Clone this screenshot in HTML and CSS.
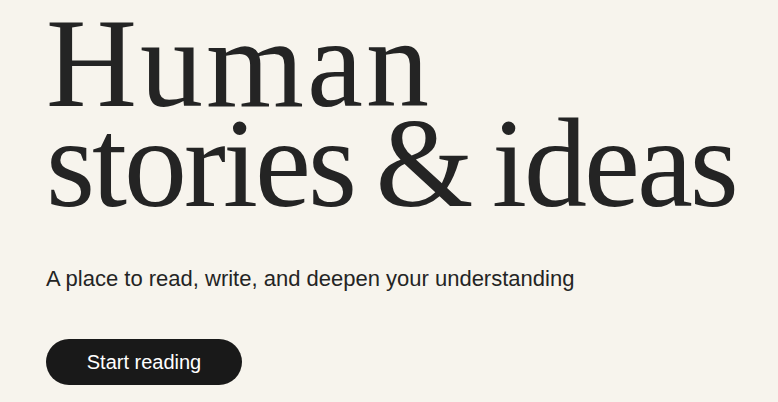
FILE: index.html
```html
<!DOCTYPE html>
<html lang="en">
<head>
<meta charset="utf-8">
<title>Human stories &amp; ideas</title>
<link rel="stylesheet" href="styles.css">
</head>
<body>
<main class="hero">
  <h1 class="hero-title"><span class="line line-wide">Human</span><span class="line line-tight">stories &amp; ideas</span></h1>
  <p class="hero-sub">A place to read, write, and deepen your understanding</p>
  <a class="hero-btn" href="#">Start reading</a>
</main>
</body>
</html>
```
FILE: styles.css
```css
html, body {
  margin: 0;
  padding: 0;
}
body {
  background: #f7f4ed;
  color: #242424;
  width: 778px;
  height: 402px;
  overflow: hidden;
}
.hero {
  display: flex;
  flex-direction: column;
  align-items: flex-start;
  padding: 14px 0 0 46px;
}
.hero-title {
  margin: 0;
  display: flex;
  flex-direction: column;
  font-family: "Liberation Serif", "Times New Roman", serif;
  font-weight: 400;
  font-size: 126px;
  line-height: 100px;
  color: #242424;
}
.line {
  display: block;
  white-space: nowrap;
}
.line-wide {
  letter-spacing: 3px;
}
.line-tight {
  letter-spacing: -3px;
  word-spacing: -7px;
}
.hero-sub {
  margin: 53px 0 0 0;
  font-family: "Liberation Sans", Arial, sans-serif;
  font-size: 22px;
  line-height: 24px;
  color: #242424;
}
.hero-btn {
  margin-top: 48px;
  display: flex;
  align-items: center;
  justify-content: center;
  width: 196px;
  height: 46px;
  border-radius: 23px;
  background: #191919;
  color: #fff;
  font-family: "Liberation Sans", Arial, sans-serif;
  font-size: 20px;
  text-decoration: none;
}
```
